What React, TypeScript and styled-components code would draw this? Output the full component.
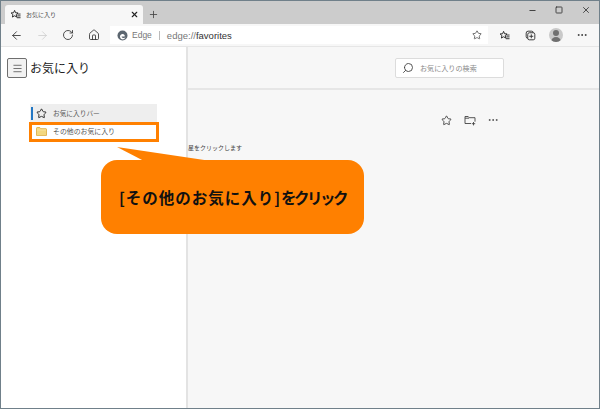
import React from 'react';
import styled, { createGlobalStyle } from 'styled-components';
import { ArrowLeft, ArrowRight, RotateCw, Home, Star, Minus, Square, X, Plus, Search, MoreHorizontal, Menu } from 'lucide-react';

const FONT = `"Noto Sans CJK JP", "Noto Sans", "Liberation Sans", sans-serif`;

const Global = createGlobalStyle`
  html, body { margin: 0; padding: 0; width: 600px; height: 409px; overflow: hidden; background: #fff; }
  #root { width: 600px; height: 409px; }
`;

const Frame = styled.div`
  position: relative;
  box-sizing: border-box;
  width: 600px;
  height: 409px;
  border: 1px solid #70808a;
  font-family: ${FONT};
  display: flex;
  flex-direction: column;
  overflow: hidden;
`;

const TitleBar = styled.div`
  height: 23px;
  flex: none;
  background: #cccccc;
  display: flex;
  align-items: flex-end;
  padding-left: 4px;
`;

const Tab = styled.div`
  box-sizing: border-box;
  width: 138px;
  height: 19px;
  background: #f7f7f7;
  border-radius: 3px 3px 0 0;
  display: flex;
  align-items: center;
  padding: 0 4px 0 5px;
  font-size: 6px;
  color: #444;
`;

const TabTitle = styled.span`
  margin-left: 5px;
  flex: 1;
`;

const NewTab = styled.div`
  width: 20px;
  height: 19px;
  display: flex;
  align-items: center;
  justify-content: center;
  color: #444;
`;

const WindowButtons = styled.div`
  margin-left: auto;
  align-self: flex-start;
  display: flex;
  height: 18px;
`;

const WindowButton = styled.div`
  width: 26.5px;
  height: 18px;
  display: flex;
  align-items: center;
  justify-content: center;
  color: #333;
`;

const Toolbar = styled.div`
  height: 22px;
  flex: none;
  background: #f7f7f7;
  display: flex;
  align-items: center;
  border-bottom: 1px solid #e6e6e6;
`;

const NavButton = styled.div`
  width: 25.6px;
  height: 22px;
  flex: none;
  display: flex;
  align-items: center;
  justify-content: center;
  color: #333;
`;

const NavGroup = styled.div`
  display: flex;
  padding-left: 3px;
  width: 106px;
  flex: none;
`;

const Address = styled.div`
  width: 378px;
  height: 18px;
  flex: none;
  background: #fff;
  display: flex;
  align-items: center;
  padding-left: 7px;
  box-sizing: border-box;
  font-family: "Liberation Sans", sans-serif;
  font-size: 8.5px;
  color: #777;
`;

const EngineName = styled.span`
  margin-left: 4px;
`;

const Sep = styled.span`
  width: 1px;
  height: 9px;
  background: #bbb;
  margin: 0 7px;
`;

const Url = styled.span`
  font-size: 9.5px;
`;

const Host = styled.span`
  color: #333;
`;

const AddressStar = styled.div`
  margin-left: auto;
  margin-right: 6px;
  display: flex;
  color: #555;
`;

const ToolIcons = styled.div`
  display: flex;
  align-items: center;
  padding-left: 4px;
`;

const Avatar = styled.div`
  width: 14px;
  height: 14px;
  border-radius: 50%;
  background: #c9c9c9;
  position: relative;
  overflow: hidden;
  &::before {
    content: '';
    position: absolute;
    left: 4px;
    top: 2px;
    width: 6px;
    height: 6px;
    border-radius: 50%;
    background: #6f6f6f;
  }
  &::after {
    content: '';
    position: absolute;
    left: 2px;
    top: 9px;
    width: 10px;
    height: 6px;
    border-radius: 5px 5px 0 0;
    background: #6f6f6f;
  }
`;

const Body = styled.div`
  flex: 1;
  display: flex;
  min-height: 0;
`;

const Sidebar = styled.aside`
  width: 187px;
  flex: none;
  box-sizing: border-box;
  background: #fff;
  border-right: 2px solid #e3e3e3;
  padding: 11px 0 0 6px;
`;

const SideHead = styled.div`
  display: flex;
  align-items: center;
  gap: 3px;
`;

const MenuBox = styled.div`
  box-sizing: border-box;
  width: 20px;
  height: 20px;
  border: 1px solid #6e6e6e;
  border-radius: 2px;
  background: #f2f2f2;
  display: flex;
  align-items: center;
  justify-content: center;
  color: #666;
`;

const SideTitle = styled.h1`
  margin: 0;
  font-size: 12px;
  font-weight: 400;
  line-height: 18px;
  color: #222;
`;

const Tree = styled.div`
  margin: 26px 0 0 23px;
  width: 127px;
`;

const TreeItem = styled.div<{ $active?: boolean }>`
  position: relative;
  height: 18px;
  display: flex;
  align-items: center;
  background: ${(p) => (p.$active ? '#eeeeee' : 'transparent')};
  padding-left: 6px;
  color: #555;
  ${(p) => p.$active && `
    &::before {
      content: '';
      position: absolute;
      left: 1px;
      top: 3px;
      width: 2px;
      height: 13px;
      background: #2277c4;
    }
  `}
`;

const TreeIcon = styled.div`
  width: 11px;
  display: flex;
  color: #222;
  margin-right: 6px;
`;

const TreeLabel = styled.span<{ $size: number }>`
  white-space: nowrap;
  font-size: ${(p) => p.$size}px;
`;

const Main = styled.main`
  flex: 1;
  background: #f7f7f7;
  display: flex;
  flex-direction: column;
`;

const MainHead = styled.div`
  height: 43px;
  flex: none;
  box-sizing: border-box;
  border-bottom: 2px solid #e6e6e6;
  padding: 11px 0 0 207px;
`;

const SearchBox = styled.div`
  box-sizing: border-box;
  width: 109px;
  height: 20px;
  background: #fff;
  border: 1px solid #dcdcdc;
  border-radius: 2px;
  display: flex;
  align-items: center;
  padding-left: 6px;
  gap: 6px;
  font-size: 7.1px;
  color: #8a8a8a;
`;

const Actions = styled.div`
  display: flex;
  justify-content: flex-end;
  align-items: center;
  gap: 11.5px;
  padding: 24px 100px 0 0;
  color: #444;
`;

const Hint = styled.p`
  margin: 16px 0 0;
  font-size: 6px;
  line-height: 12px;
  color: #444;
`;

const Highlight = styled.div`
  position: absolute;
  left: 28px;
  top: 121px;
  box-sizing: border-box;
  width: 130px;
  height: 20px;
  border: 3px solid #ff8000;
`;

const Callout = styled.div`
  position: absolute;
  left: 100px;
  top: 159px;
  width: 263px;
  height: 74px;
  border-radius: 16px;
  background: #ff8000;
  display: flex;
  align-items: center;
  justify-content: center;
  color: #111;
  font-size: 15.5px;
  font-weight: 700;
  white-space: nowrap;
`;

const CalloutWide = styled.span`
  letter-spacing: 1px;
`;

const CalloutTight = styled.span`
  letter-spacing: -2.5px;
`;

const CalloutTail = styled.svg`
  position: absolute;
  left: 16px;
  top: -13px;
`;

const TabStar = () => (
  <svg width="11" height="11" viewBox="0 0 12 12" fill="none" stroke="#222" strokeWidth="1">
    <path d="M5 1.5l1.1 2.6 2.7.2-2 1.8.6 2.7L5 7.4 2.6 8.8l.6-2.7-2-1.8 2.7-.2z" />
    <path d="M8 5.5h3.5M8 7.5h3.5M7.5 9.5h4" />
  </svg>
);

const EdgeLogo = () => (
  <svg width="11" height="11" viewBox="0 0 11 11">
    <circle cx="5.5" cy="5.5" r="5" fill="#5c6670" />
    <path d="M3 6.5C3 4.5 5 3.6 6.5 4.2 7.7 4.7 8 5.8 7.6 6.4H4.6C4.8 7.8 6.6 8.4 8.6 7.6 7.8 9 6.4 9.6 5 9.3 3.8 9 3 7.9 3 6.5z" fill="#fff" />
  </svg>
);

const CollectionsIcon = () => (
  <svg width="11" height="11" viewBox="0 0 14 14" fill="none" stroke="#333" strokeWidth="1.2">
    <rect x="3.5" y="3.5" width="9" height="9" rx="2" />
    <path d="M3.5 10.5A2 2 0 0 1 1.5 8.5V4A2.5 2.5 0 0 1 4 1.5h4.5a2 2 0 0 1 2 2" />
    <path d="M8 5.5v5M5.5 8h5" />
  </svg>
);

const AddFolder = () => (
  <svg width="12" height="11" viewBox="0 0 12 11" fill="none" stroke="#444" strokeWidth="0.9">
    <path d="M7 8.5H1V1.5h3.2l1 1.2H11v4" />
    <path d="M1 3.2h4" />
    <path d="M9.5 7v3.4M7.8 8.7h3.4" />
  </svg>
);

const Folder = () => (
  <svg width="11" height="9" viewBox="0 0 11 9">
    <path d="M.5 1.2C.5.8.8.5 1.2.5h2.6l1 1.2h5.2c.3 0 .5.2.5.5v6c0 .3-.2.5-.5.5H1c-.3 0-.5-.2-.5-.5z" fill="#f3d77f" stroke="#d9a83a" strokeWidth=".8" />
    <path d="M1 3h9" stroke="#fbe6a8" strokeWidth=".8" />
  </svg>
);

export default function App(): React.ReactElement {
  return (
    <>
      <Global />
      <Frame>
        <TitleBar>
          <Tab>
            <TabStar />
            <TabTitle>お気に入り</TabTitle>
            <X size={9} strokeWidth={3} color="#222" />
          </Tab>
          <NewTab><Plus size={11} strokeWidth={1.8} /></NewTab>
          <WindowButtons>
            <WindowButton><Minus size={9} strokeWidth={2.4} /></WindowButton>
            <WindowButton><Square size={8} strokeWidth={2.6} /></WindowButton>
            <WindowButton><X size={10} strokeWidth={2} /></WindowButton>
          </WindowButtons>
        </TitleBar>
        <Toolbar>
          <NavGroup>
            <NavButton><ArrowLeft size={13} strokeWidth={1.6} /></NavButton>
            <NavButton><ArrowRight size={13} strokeWidth={1.4} color="#ccc" /></NavButton>
            <NavButton><RotateCw size={12} strokeWidth={1.7} /></NavButton>
            <NavButton><Home size={12} strokeWidth={1.7} /></NavButton>
          </NavGroup>
          <Address>
            <EdgeLogo />
            <EngineName>Edge</EngineName>
            <Sep />
            <Url>edge://<Host>favorites</Host></Url>
            <AddressStar><Star size={10} strokeWidth={2} /></AddressStar>
          </Address>
          <ToolIcons>
            <NavButton><TabStar /></NavButton>
            <NavButton><CollectionsIcon /></NavButton>
            <NavButton><Avatar /></NavButton>
            <NavButton><MoreHorizontal size={12} strokeWidth={1.8} /></NavButton>
          </ToolIcons>
        </Toolbar>
        <Body>
          <Sidebar>
            <SideHead>
              <MenuBox><Menu size={11} strokeWidth={2} /></MenuBox>
              <SideTitle>お気に入り</SideTitle>
            </SideHead>
            <Tree>
              <TreeItem $active>
                <TreeIcon><Star size={11} strokeWidth={2} /></TreeIcon>
                <TreeLabel $size={6.7}>お気に入りバー</TreeLabel>
              </TreeItem>
              <TreeItem>
                <TreeIcon><Folder /></TreeIcon>
                <TreeLabel $size={6.9}>その他のお気に入り</TreeLabel>
              </TreeItem>
            </Tree>
          </Sidebar>
          <Main>
            <MainHead>
              <SearchBox>
                <Search size={12} strokeWidth={1.8} color="#444" style={{ transform: 'scaleX(-1)' }} />
                お気に入りの検索
              </SearchBox>
            </MainHead>
            <Actions>
              <Star size={11} strokeWidth={2} />
              <AddFolder />
              <MoreHorizontal size={12} strokeWidth={1.6} />
            </Actions>
            <Hint>星をクリックします</Hint>
          </Main>
        </Body>
        <Highlight />
        <Callout>
          <CalloutTail width="100" height="14" viewBox="0 0 100 14">
            <polygon points="0,0 27,14 94,14" fill="#ff8000" />
          </CalloutTail>
          <CalloutWide>[その他のお気に入り]</CalloutWide>
          <CalloutTight>をクリック</CalloutTight>
        </Callout>
      </Frame>
    </>
  );
}
